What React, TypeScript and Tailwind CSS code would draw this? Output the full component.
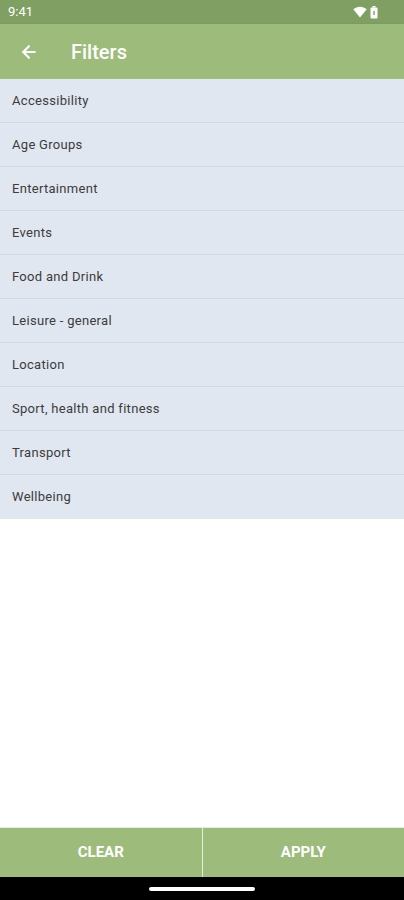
import React from 'react';
import { ArrowLeft } from 'lucide-react';

const filters = [
  'Accessibility',
  'Age Groups',
  'Entertainment',
  'Events',
  'Food and Drink',
  'Leisure - general',
  'Location',
  'Sport, health and fitness',
  'Transport',
  'Wellbeing',
];

function Wifi() {
  return (
    <svg width="14" height="12" viewBox="0 0 14 12">
      <path d="M7 11.5L0.3 3.2C2.2 1.6 4.5 0.7 7 0.7s4.8 0.9 6.7 2.5z" fill="white" />
    </svg>
  );
}

function Battery() {
  return (
    <svg width="8" height="13" viewBox="0 0 8 13">
      <rect x="2.5" y="0" width="3" height="1.5" fill="white" />
      <rect x="0.5" y="1.5" width="7" height="11" rx="1" fill="white" />
      <rect x="3.3" y="5" width="1.4" height="4" fill="#7f9f63" />
    </svg>
  );
}

export default function App() {
  return (
    <div className="w-[404px] h-[900px] flex flex-col bg-white font-['Roboto',sans-serif]">
      {/* Status bar */}
      <div className="h-[24px] bg-[#7f9f63] flex items-center justify-between px-[8px] text-white text-[13px]">
        <span>9:41</span>
        <div className="flex items-center gap-[3px] pr-[18px]">
          <Wifi />
          <Battery />
        </div>
      </div>

      {/* App bar */}
      <div className="h-[55px] bg-[#9dbb7b] flex items-center shadow-sm">
        <div className="w-[56px] flex justify-center pl-[1px]">
          <ArrowLeft size={20} color="white" strokeWidth={2.5} />
        </div>
        <h1 className="ml-[15px] text-white text-[20px] font-medium">Filters</h1>
      </div>

      {/* List */}
      <div className="flex flex-col bg-[#e1e7f0]">
        {filters.map((f, i) => (
          <div
            key={f}
            className={`h-[44px] flex items-center px-[12px] text-[13px] tracking-[0.3px] text-[#3c3c3c] ${
              i < filters.length - 1 ? 'border-b border-[#d4d9e1]' : ''
            }`}
          >
            {f}
          </div>
        ))}
      </div>

      <div className="flex-1" />

      {/* Footer buttons */}
      <div className="h-[50px] flex border-t border-[#e4ecdc]">
        <button className="flex-1 bg-[#9dbb7b] text-white font-bold text-[15px] border-r border-[#e4ecdc]">
          CLEAR
        </button>
        <button className="flex-1 bg-[#9dbb7b] text-white font-bold text-[15px]">APPLY</button>
      </div>

      {/* Nav bar */}
      <div className="h-[23px] bg-black flex items-center justify-center">
        <div className="w-[106px] h-[4px] rounded-full bg-white" />
      </div>
    </div>
  );
}
